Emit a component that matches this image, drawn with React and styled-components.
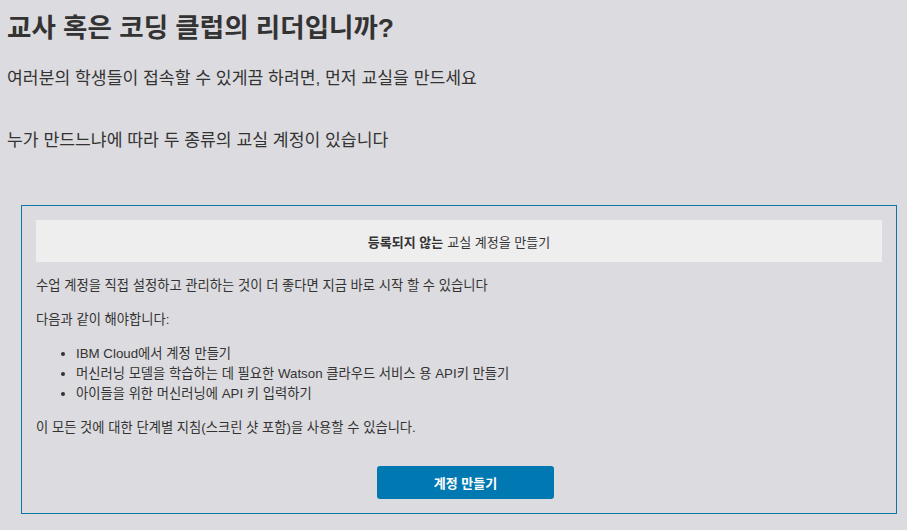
import React from "react";
import styled, { createGlobalStyle } from "styled-components";

const Global = createGlobalStyle`
  html, body {
    margin: 0;
    padding: 0;
    background: #dcdbdf;
  }
  body {
    font-family: "Liberation Sans", "Noto Sans CJK KR", sans-serif;
    color: #333333;
  }
`;

const Page = styled.div`
  padding: 0 0 0 7px;
  width: 907px;
  box-sizing: border-box;
`;

const Title = styled.h1`
  margin: 13px 0 0;
  font-size: 26.5px;
  line-height: 31px;
  font-weight: 700;
  color: #333;
`;

const Lead = styled.p`
  margin: ${(p) => p.$top}px 0 0;
  font-size: 17.2px;
  line-height: 24px;
  color: #333;
`;

const Card = styled.section`
  margin: 53px 10px 0 14px;
  border: 1px solid #0b76a8;
  padding: 14px;
  display: flex;
  flex-direction: column;
`;

const CardHeader = styled.div`
  height: 42px;
  background: #eeeeee;
  display: flex;
  align-items: center;
  justify-content: center;
  font-size: 13px;
  color: #333;
`;

const Strong = styled.strong`
  font-weight: 700;
  margin-right: 4px;
`;

const Text = styled.p`
  margin: 14px 0 0;
  font-size: 13.3px;
  line-height: 20px;
`;

const List = styled.ul`
  margin: 14px 0 0;
  padding-left: 40px;
  font-size: 13.3px;
  line-height: 20px;
`;

const Actions = styled.div`
  margin-top: 28px;
  display: flex;
  justify-content: center;
  padding-left: 13px;
`;

const Button = styled.button`
  width: 177px;
  height: 33px;
  border: none;
  border-radius: 3px;
  background: #0079b3;
  color: #ffffff;
  font-family: inherit;
  font-size: 13px;
  font-weight: 700;
  cursor: pointer;
`;

export default function App() {
  return (
    <>
      <Global />
      <Page>
        <Title>교사 혹은 코딩 클럽의 리더입니까?</Title>
        <Lead $top={22}>여러분의 학생들이 접속할 수 있게끔 하려면, 먼저 교실을 만드세요</Lead>
        <Lead $top={38}>누가 만드느냐에 따라 두 종류의 교실 계정이 있습니다</Lead>
        <Card>
          <CardHeader>
            <Strong>등록되지 않는</Strong>교실 계정을 만들기
          </CardHeader>
          <Text>수업 계정을 직접 설정하고 관리하는 것이 더 좋다면 지금 바로 시작 할 수 있습니다</Text>
          <Text>다음과 같이 해야합니다:</Text>
          <List>
            <li>IBM Cloud에서 계정 만들기</li>
            <li>머신러닝 모델을 학습하는 데 필요한 Watson 클라우드 서비스 용 API키 만들기</li>
            <li>아이들을 위한 머신러닝에 API 키 입력하기</li>
          </List>
          <Text>이 모든 것에 대한 단계별 지침(스크린 샷 포함)을 사용할 수 있습니다.</Text>
          <Actions>
            <Button>계정 만들기</Button>
          </Actions>
        </Card>
      </Page>
    </>
  );
}
